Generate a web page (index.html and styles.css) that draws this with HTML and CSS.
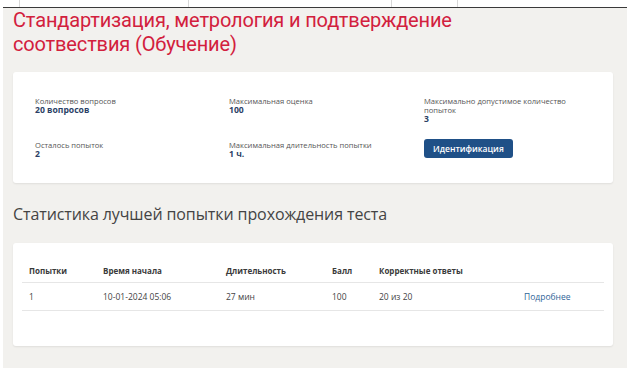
FILE: index.html
```html
<!DOCTYPE html>
<html lang="ru">
<head>
<meta charset="utf-8">
<title>Тест</title>
<link rel="stylesheet" href="styles.css">
</head>
<body>
<div class="page">
  <div class="strip">
    <span class="cell c1"></span>
    <span class="cell c2"></span>
    <span class="cell c3"></span>
    <span class="cell c4"></span>
    <span class="cell c5"></span>
  </div>
  <div class="content">
    <h1 class="title">Стандартизация, метрология и подтверждение<br>соотвествия (Обучение)</h1>

    <div class="card info">
      <div class="item">
        <div class="label">Количество вопросов</div>
        <div class="value">20 вопросов</div>
      </div>
      <div class="item">
        <div class="label">Максимальная оценка</div>
        <div class="value">100</div>
      </div>
      <div class="item">
        <div class="label">Максимально допустимое количество попыток</div>
        <div class="value">3</div>
      </div>
      <div class="item">
        <div class="label">Осталось попыток</div>
        <div class="value">2</div>
      </div>
      <div class="item">
        <div class="label">Максимальная длительность попытки</div>
        <div class="value">1 ч.</div>
      </div>
      <div class="item">
        <button class="btn" type="button">Идентификация</button>
      </div>
    </div>

    <h2 class="subtitle">Статистика лучшей попытки прохождения теста</h2>

    <div class="card stats">
      <table class="table">
        <thead>
          <tr>
            <th class="w1">Попытки</th>
            <th class="w2">Время начала</th>
            <th class="w3">Длительность</th>
            <th class="w4">Балл</th>
            <th class="w5">Корректные ответы</th>
            <th class="w6"></th>
          </tr>
        </thead>
        <tbody>
          <tr>
            <td>1</td>
            <td>10-01-2024 05:06</td>
            <td>27 мин</td>
            <td>100</td>
            <td>20 из 20</td>
            <td><a class="link" href="#">Подробнее</a></td>
          </tr>
        </tbody>
      </table>
    </div>
  </div>
</div>
</body>
</html>
```
FILE: styles.css
```css
* { box-sizing: border-box; }

html, body {
  margin: 0;
  padding: 0;
  background: #ffffff;
  font-family: "Open Sans", "Noto Sans", sans-serif;
  color: #444;
}

.page {
  margin-left: 3px;
  width: 624px;
  background: #f2f1ee;
}

.strip {
  display: flex;
  height: 8px;
  background: #ffffff;
  border-bottom: 1px solid #3a3a3a;
}

.cell {
  display: block;
  height: 100%;
  border-right: 1px solid #d8d8d8;
}
.c1 { width: 17px; }
.c2 { width: 169px; }
.c3 { width: 203px; }
.c4 { width: 66px; }
.c5 { width: 0; border-right: none; }

.content {
  padding: 0 14px 22px 10px;
}

.title {
  margin: 0;
  font-family: Roboto, "Noto Sans", sans-serif;
  font-weight: 400;
  font-size: 20px;
  letter-spacing: -0.15px;
  line-height: 24px;
  color: #d2203d;
}

.card {
  background: #ffffff;
  border-radius: 3px;
  box-shadow: 0 1px 2px rgba(0, 0, 0, 0.08);
}

.info {
  margin-top: 16px;
  height: 111px;
  padding: 25px 22px 0 22px;
  display: grid;
  grid-template-columns: 194px 195px 165px;
  align-content: start;
  row-gap: 17px;
  align-items: start;
}

.label {
  font-size: 7.6px;
  line-height: 9px;
  color: #555;
}

.value {
  font-size: 8.6px;
  line-height: 9px;
  font-weight: 700;
  color: #2b3f66;
}

.btn {
  display: block;
  margin-top: -2px;
  height: 19px;
  padding: 0 9px;
  border: none;
  border-radius: 3px;
  background: #1f5087;
  color: #ffffff;
  font-family: "Open Sans", sans-serif;
  font-size: 8.5px;
  font-weight: 600;
  line-height: 19px;
}

.subtitle {
  margin: 20px 0 0 0;
  font-size: 16px;
  font-weight: 400;
  letter-spacing: -0.1px;
  line-height: 22px;
  color: #444;
}

.stats {
  margin-top: 18px;
  height: 103px;
  padding: 13px 9px 0 9px;
}

.table {
  width: 582px;
  border-collapse: collapse;
}

.table th {
  text-align: left;
  font-weight: 700;
  font-size: 8px;
  color: #3a3a3a;
  padding: 9px 7px 5px;
  line-height: 12px;
  border-bottom: 1px solid #e6e6e6;
}

.table td {
  padding: 8px 7px 7px;
  font-size: 8.5px;
  line-height: 12px;
  color: #444;
  border-bottom: 1px solid #e6e6e6;
}

.w1 { width: 74px; }
.w2 { width: 123px; }
.w3 { width: 106px; }
.w4 { width: 47px; }
.w5 { width: 145px; }
.w6 { width: 87px; }

.link {
  color: #2f6598;
  text-decoration: none;
}
```
